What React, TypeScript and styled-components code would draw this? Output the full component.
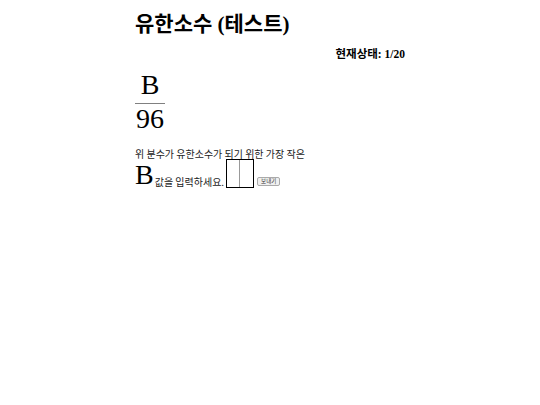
import React from "react";
import styled, { createGlobalStyle } from "styled-components";

const Global = createGlobalStyle`
  html, body { margin: 0; padding: 0; background: #fff; }
  body {
    margin: 8px;
    font-family: "Liberation Serif", "Noto Sans CJK KR", serif;
    color: #000;
  }
`;

const Container = styled.div`
  width: 270px;
  margin: 0 auto;
  display: flex;
  flex-direction: column;
`;

const Title = styled.h2`
  margin: 3px 0 0;
  font-size: 21px;
  font-weight: bold;
  line-height: 26px;
`;

const Status = styled.div`
  align-self: flex-end;
  margin-top: 10px;
  font-size: 11.5px;
  font-weight: bold;
  line-height: 14px;
`;

const Fraction = styled.div`
  margin-top: 9px;
  display: inline-flex;
  flex-direction: column;
  align-items: center;
  align-self: flex-start;
  font-size: 28px;
  line-height: 30px;
`;

const FracPart = styled.span`
  padding: 0 1px;
`;

const FracLine = styled.div`
  align-self: stretch;
  height: 1px;
  background: #808080;
  margin: 3px 0 0;
`;

const Desc = styled.p`
  margin: 14px 0 0;
  font-family: "Noto Sans CJK KR", sans-serif;
  font-size: 10px;
  line-height: 11px;
  color: #222;
`;

const AnswerRow = styled.div`
  display: flex;
  align-items: flex-end;
  margin-top: 0;
`;

const BigB = styled.span`
  font-size: 28px;
  line-height: 26px;
`;

const Hint = styled.span`
  font-family: "Noto Sans CJK KR", sans-serif;
  font-size: 10px;
  line-height: 12px;
  color: #222;
  margin-left: 1px;
`;

const InputBox = styled.span`
  position: relative;
  display: inline-block;
  width: 26px;
  height: 27px;
  border: 1px solid #000;
  margin-left: 2px;
  &::after {
    content: "";
    position: absolute;
    left: 12px;
    top: 0;
    bottom: 0;
    width: 1px;
    background: #999;
  }
`;

const Input = styled.input`
  width: 100%;
  height: 100%;
  border: none;
  outline: none;
  padding: 0;
  background: transparent;
`;

const SendButton = styled.button`
  margin-left: 3px;
  margin-bottom: 2px;
  font-family: "Noto Sans CJK KR", sans-serif;
  font-size: 5.5px;
  line-height: 7px;
  padding: 0 3px;
  border: 1px solid #aaa;
  border-radius: 2px;
  background: #f0f0f0;
  color: #333;
`;

export default function App() {
  return (
    <>
      <Global />
      <Container>
        <Title>유한소수 (테스트)</Title>
        <Status>현재상태: 1/20</Status>
        <Fraction>
          <FracPart>B</FracPart>
          <FracLine />
          <FracPart>96</FracPart>
        </Fraction>
        <Desc>위 분수가 유한소수가 되기 위한 가장 작은</Desc>
        <AnswerRow>
          <BigB>B</BigB>
          <Hint>값을 입력하세요.</Hint>
          <InputBox>
            <Input type="text" />
          </InputBox>
          <SendButton>보내기</SendButton>
        </AnswerRow>
      </Container>
    </>
  );
}
